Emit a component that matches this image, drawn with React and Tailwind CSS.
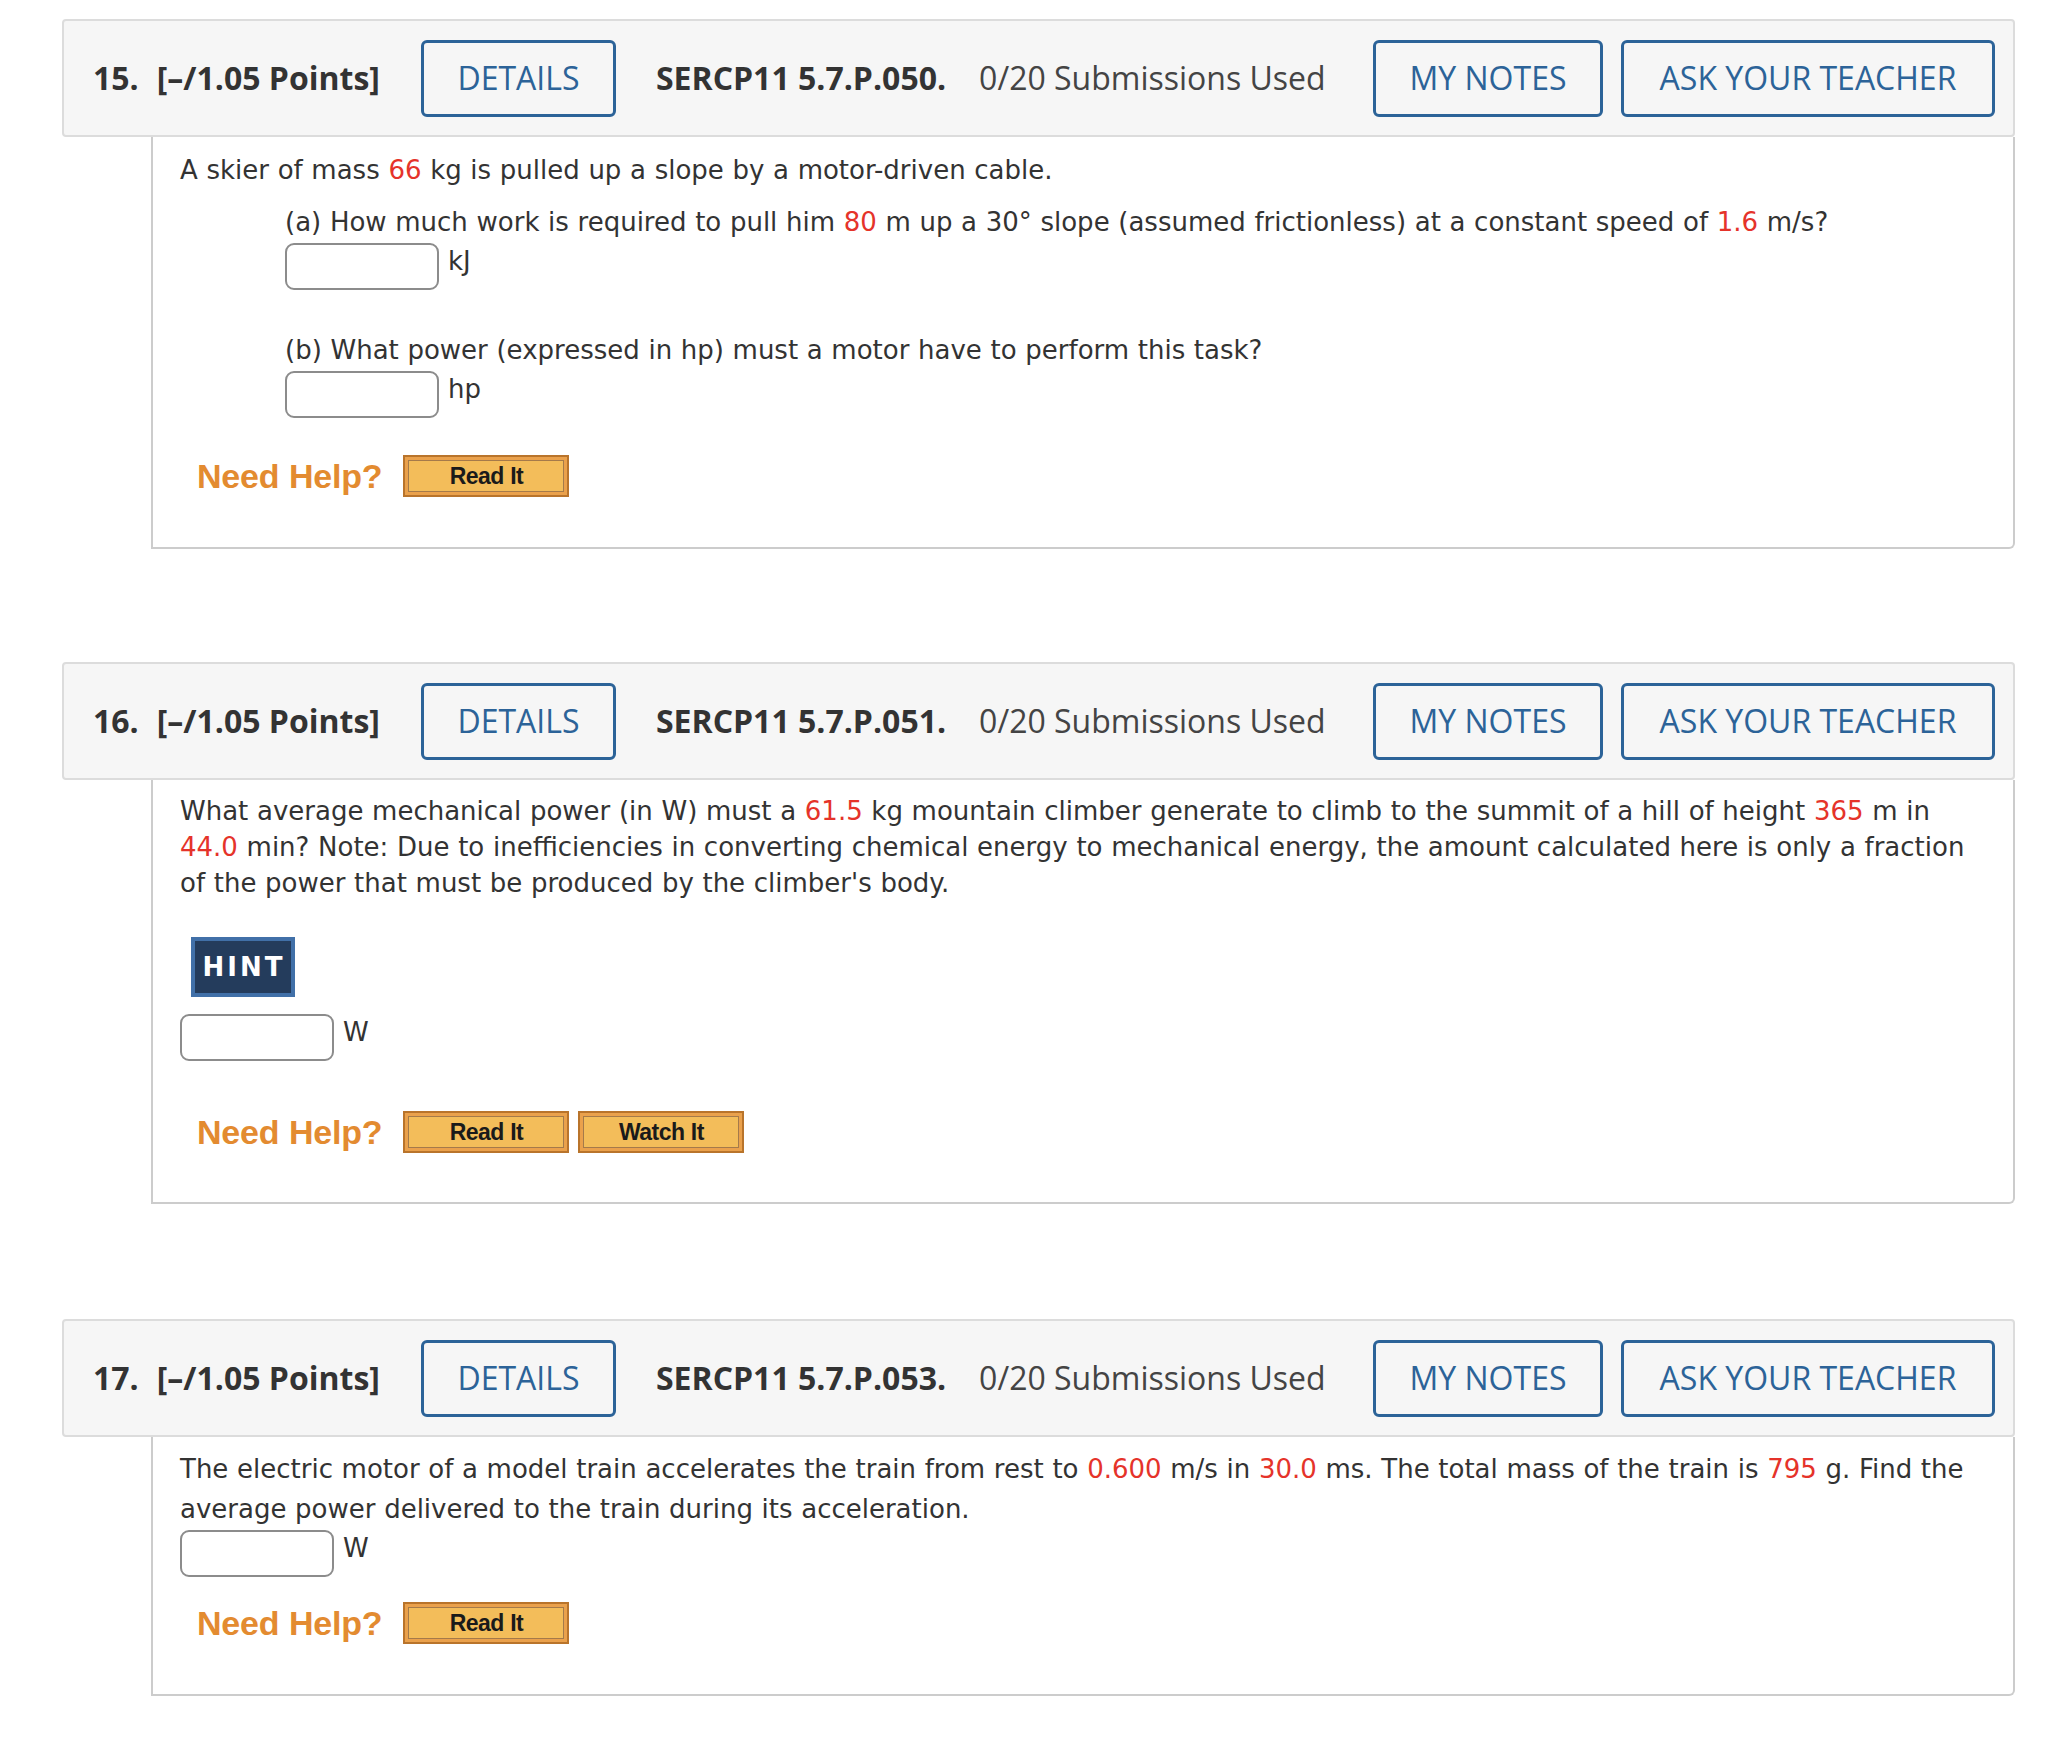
import React from "react";

const R = ({ children }) => <span className="text-[#e5332a]">{children}</span>;

function Header({ num, code }) {
  const btn =
    "h-[77px] border-[3px] border-[#2c6398] rounded-[6px] text-[#2c6398] text-[32px] flex items-center justify-center bg-[#f6f6f6] shrink-0";
  return (
    <div className="ml-[62px] w-[1953px] h-[118px] border-2 border-[#dcdcdc] rounded-[4px] bg-[#f6f6f6] flex items-center pl-[29px] pr-[18px] font-['Open_Sans',sans-serif] whitespace-nowrap">
      <span className="text-[32px] font-bold text-[#333]">{num}.</span>
      <span className="ml-[18px] text-[32px] font-bold text-[#333]">[–/1.05 Points]</span>
      <div className={btn + " ml-[41px] w-[195px]"}>DETAILS</div>
      <span className="ml-[40px] text-[32px] font-bold text-[#333]">{code}</span>
      <span className="ml-[33px] text-[32px] text-[#444]">0/20 Submissions Used</span>
      <div className={btn + " ml-auto w-[230px]"}>MY NOTES</div>
      <div className={btn + " ml-[18px] w-[374px]"}>ASK YOUR TEACHER</div>
    </div>
  );
}

function HelpBtn({ label }) {
  return (
    <div className="w-[166px] h-[42px] border-2 border-[#b9742b] bg-[#eaa14c] p-[3px] shrink-0">
      <div className="w-full h-full border border-[#a57a4a] bg-[#f3bd5a] flex items-center justify-center font-['Liberation_Sans',Arial,sans-serif] font-bold text-[23px] tracking-[-0.5px] text-[#1a1a1a] leading-none">
        {label}
      </div>
    </div>
  );
}

function NeedHelp({ watch }) {
  return (
    <div className="flex items-center pl-[17px]">
      <span className="font-['Liberation_Sans',Arial,sans-serif] font-bold text-[34px] leading-none text-[#e38b30] tracking-[-0.2px]">
        Need Help?
      </span>
      <div className="ml-[21px] flex gap-[9px]">
        <HelpBtn label="Read It" />
        {watch && <HelpBtn label="Watch It" />}
      </div>
    </div>
  );
}

function Input({ unit }) {
  return (
    <div className="flex items-start">
      <div className="w-[154px] h-[47px] border-2 border-[#8c8c8c] rounded-[9px] bg-white shrink-0" />
      <span className="ml-[9px] leading-[36px]">{unit}</span>
    </div>
  );
}

function Body({ children, pt, pb }) {
  return (
    <div
      className={
        "ml-[151px] w-[1864px] border-x-2 border-b-2 border-[#cccccc] rounded-br-[6px] pl-[27px] pr-[10px] font-['DejaVu_Sans',Verdana,sans-serif] text-[26px] text-[#333] [word-spacing:0.4px] " +
        pt +
        " " +
        pb
      }
    >
      {children}
    </div>
  );
}

export default function App() {
  return (
    <div className="w-[2048px] h-[1756px] bg-white pt-[19px]">
      <Header num="15" code="SERCP11 5.7.P.050." />
      <Body pt="pt-[15px]" pb="pb-[50px]">
        <div className="leading-[36px]">
          A skier of mass <R>66</R> kg is pulled up a slope by a motor-driven cable.
        </div>
        <div className="ml-[105px]">
          <div className="leading-[36px] mt-[16px]">
            (a) How much work is required to pull him <R>80</R> m up a 30° slope (assumed frictionless) at a constant speed of <R>1.6</R> m/s?
          </div>
          <div className="mt-[3px]">
            <Input unit="kJ" />
          </div>
          <div className="leading-[36px] mt-[42px]">
            (b) What power (expressed in hp) must a motor have to perform this task?
          </div>
          <div className="mt-[3px]">
            <Input unit="hp" />
          </div>
        </div>
        <div className="mt-[37px]">
          <NeedHelp />
        </div>
      </Body>

      <div className="mt-[113px]">
        <Header num="16" code="SERCP11 5.7.P.051." />
      </div>
      <Body pt="pt-[13px]" pb="pb-[49px]">
        <div className="leading-[36px]">
          What average mechanical power (in W) must a <R>61.5</R> kg mountain climber generate to climb to the summit of a hill of height <R>365</R> m in
          <br />
          <R>44.0</R> min? Note: Due to inefficiencies in converting chemical energy to mechanical energy, the amount calculated here is only a fraction
          <br />
          of the power that must be produced by the climber's body.
        </div>
        <div className="mt-[36px] ml-[11px] w-[104px] h-[60px] border-[4px] border-[#4170a8] bg-[#243c5c] flex items-center justify-center">
          <span className="text-white font-bold text-[26px] tracking-[3px] leading-none pl-[2px]">HINT</span>
        </div>
        <div className="mt-[17px]">
          <Input unit="W" />
        </div>
        <div className="mt-[50px]">
          <NeedHelp watch />
        </div>
      </Body>

      <div className="mt-[115px]">
        <Header num="17" code="SERCP11 5.7.P.053." />
      </div>
      <Body pt="pt-[12px]" pb="pb-[50px]">
        <div className="leading-[40px]">
          The electric motor of a model train accelerates the train from rest to <R>0.600</R> m/s in <R>30.0</R> ms. The total mass of the train is <R>795</R> g. Find the
          <br />
          average power delivered to the train during its acceleration.
        </div>
        <div className="mt-[1px]">
          <Input unit="W" />
        </div>
        <div className="mt-[25px]">
          <NeedHelp />
        </div>
      </Body>
    </div>
  );
}
